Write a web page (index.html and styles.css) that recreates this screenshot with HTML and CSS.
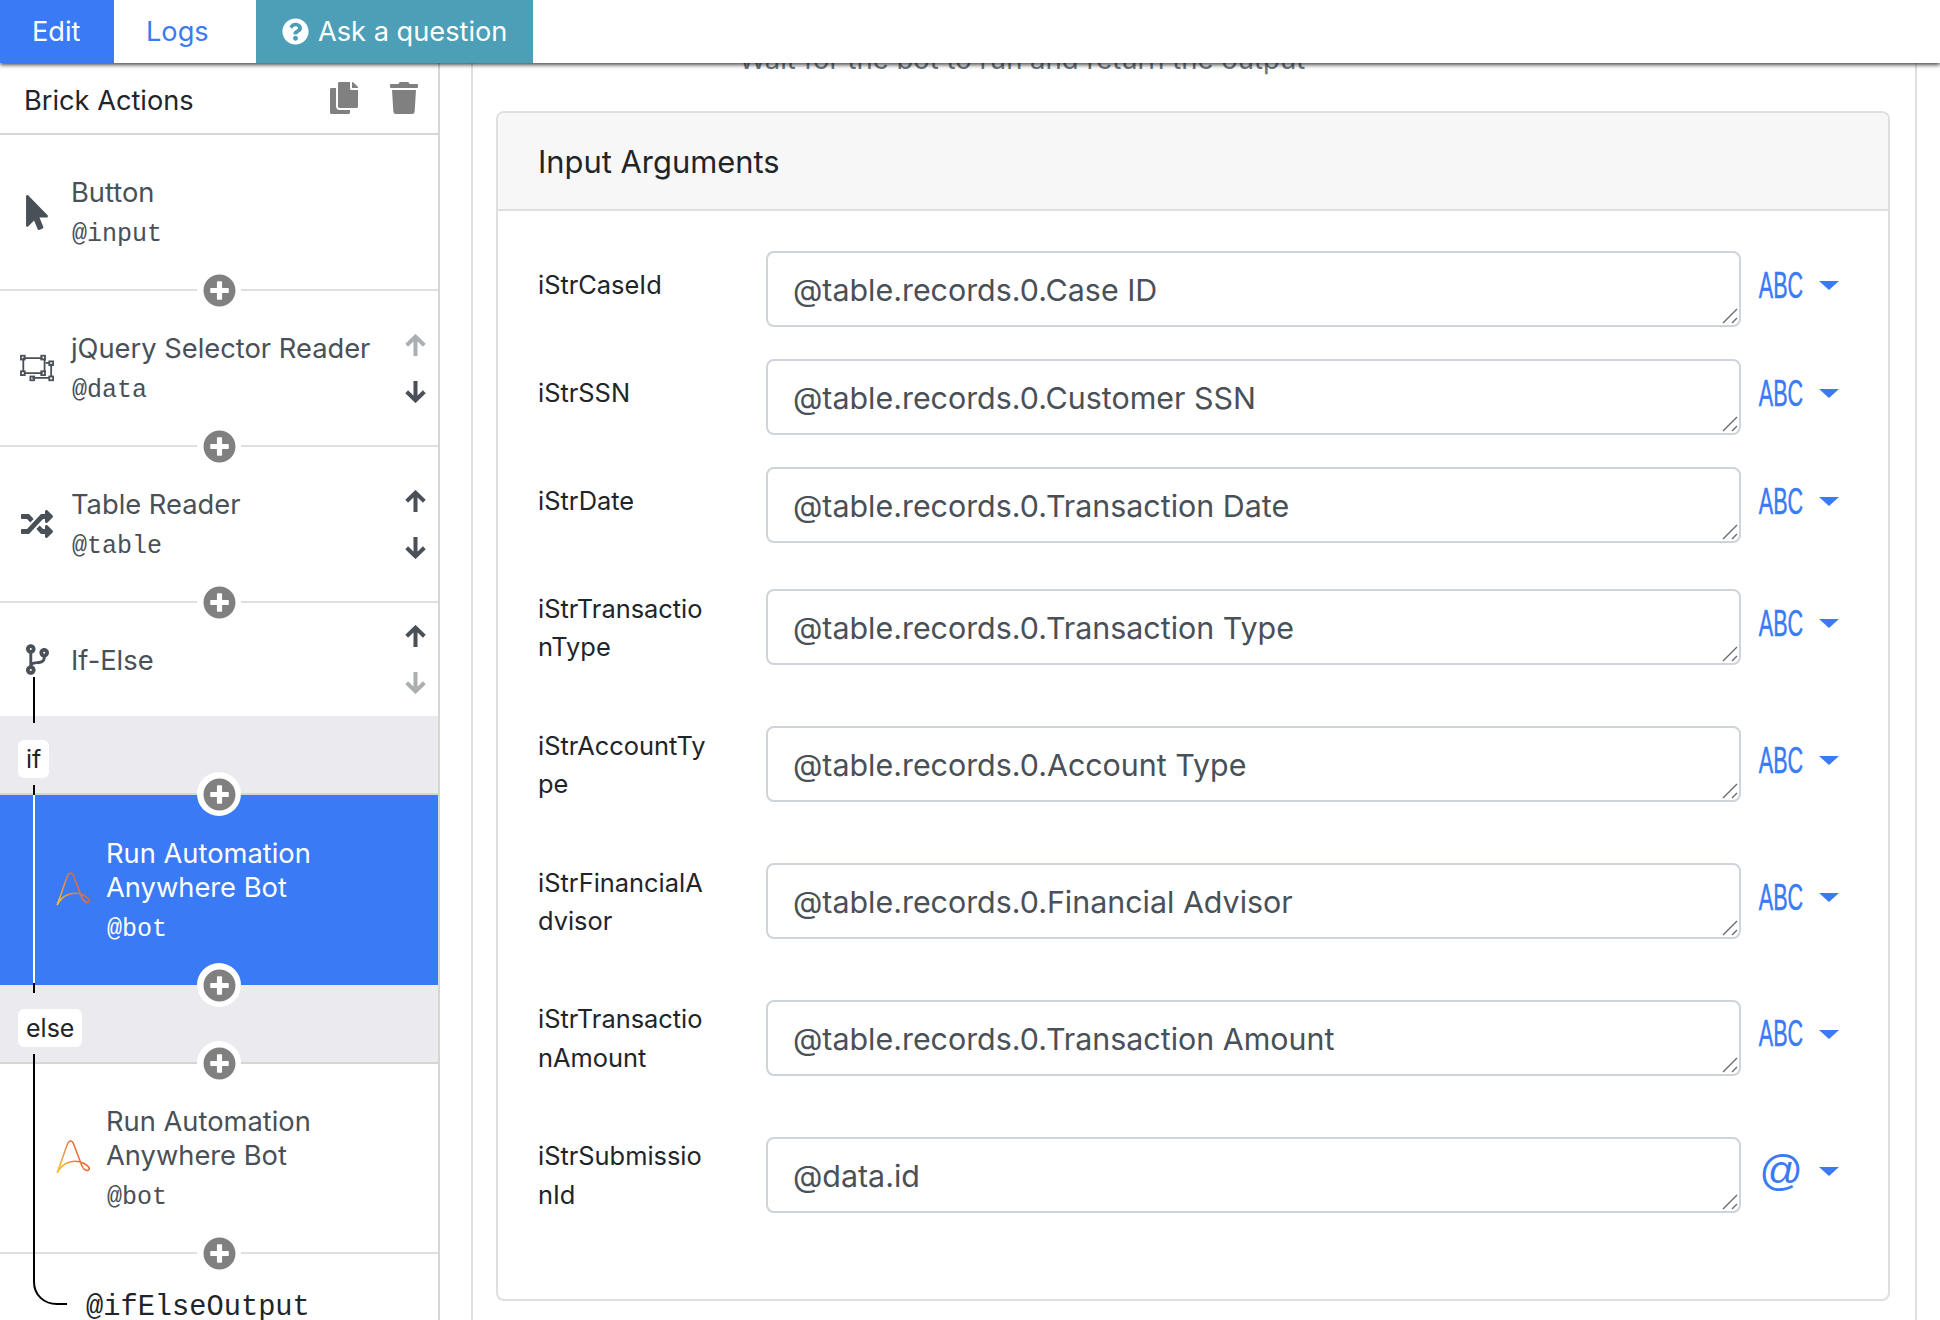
FILE: index.html
```html
<!DOCTYPE html>
<html lang="en">
<head>
    <meta charset="UTF-8">
    <title>Brick Actions</title>
    <link rel="stylesheet" href="styles.css">
</head>
<body>
    <svg class="sprite" aria-hidden="true">
        <defs>
            <linearGradient id="aa-grad" gradientUnits="userSpaceOnUse" x1="1" y1="33" x2="33" y2="15">
                <stop offset="0" stop-color="#fbc531"/>
                <stop offset="0.5" stop-color="#ee8a3c"/>
                <stop offset="1" stop-color="#dd4f2c"/>
            </linearGradient>
        </defs>
        <symbol id="i-plus" viewBox="0 0 512 512"><path d="M256 8C119 8 8 119 8 256s111 248 248 248 248-111 248-248S393 8 256 8zm144 276c0 6.6-5.4 12-12 12h-92v92c0 6.6-5.4 12-12 12h-56c-6.6 0-12-5.4-12-12v-92h-92c-6.6 0-12-5.4-12-12v-56c0-6.6 5.4-12 12-12h92v-92c0-6.6 5.4-12 12-12h56c6.6 0 12 5.4 12 12v92h92c6.6 0 12 5.4 12 12v56z"/></symbol>
        <symbol id="i-up" viewBox="0 0 24 24"><path d="M12 23V3.500M2.800 11.800 12 2.800l9.200 9" fill="none" stroke="currentColor" stroke-width="4.200"/></symbol>
        <symbol id="i-down" viewBox="0 0 24 24"><path d="M12 1V20.500M2.800 12.200l9.200 9 9.200-9" fill="none" stroke="currentColor" stroke-width="4.200"/></symbol>
        <symbol id="i-aa" viewBox="0 0 34 34"><path d="M1 33C6 21 9 9 12 3c1.500-2.800 4-2.800 5.200 0l8.800 23c1.500 4 5.500 5.500 7 3.500 1.200-2-1.500-4-5-6-5-2.500-11-3-17-.5C7 24.500 4 28 1 33z" fill="none" stroke="url(#aa-grad)" stroke-width="1.5"/></symbol>
        <symbol id="i-grip" viewBox="0 0 16 16"><path d="M1 15 15 1M10 15l5-5" fill="none" stroke="#6a6a6a" stroke-width="1.400"/></symbol>
    </svg>

    <nav class="topbar">
        <a class="tab tab-edit">Edit</a>
        <a class="tab tab-logs">Logs</a>
        <a class="tab tab-ask">
            <svg class="ask-icon" viewBox="0 0 512 512"><path d="M504 256c0 136.997-111.043 248-248 248S8 392.997 8 256C8 119.083 119.043 8 256 8s248 111.083 248 248zM262.655 90c-54.497 0-89.255 22.957-116.549 63.758-3.536 5.286-2.353 12.415 2.715 16.258l34.699 26.31c5.205 3.947 12.621 3.008 16.665-2.122 17.864-22.658 30.113-35.797 57.303-35.797 20.429 0 45.698 13.148 45.698 32.958 0 14.976-12.363 22.667-32.534 33.976C247.128 238.528 216 254.941 216 296v4c0 6.627 5.373 12 12 12h56c6.627 0 12-5.373 12-12v-1.333c0-28.462 83.186-29.647 83.186-106.667 0-58.002-60.165-102-116.531-102zM256 338c-25.365 0-46 20.635-46 46 0 25.364 20.635 46 46 46s46-20.636 46-46c0-25.365-20.635-46-46-46z"/></svg>
            Ask a question
        </a>
    </nav>

    <div class="workspace">
        <aside class="sidebar">
            <div class="sidebar-head">
                <span class="sidebar-title">Brick Actions</span>
                <svg class="head-icon head-copy" viewBox="0 0 448 512"><path d="M320 448v40c0 13.255-10.745 24-24 24H24c-13.255 0-24-10.745-24-24V120c0-13.255 10.745-24 24-24h72v296c0 30.879 25.121 56 56 56h168zm0-344V0H152c-13.255 0-24 10.745-24 24v368c0 13.255 10.745 24 24 24h272c13.255 0 24-10.745 24-24V128H344c-13.2 0-24-10.8-24-24zm120.971-31.029L375.029 7.029A24 24 0 0 0 358.059 0H352v96h96v-6.059a24 24 0 0 0-7.029-16.97z"/></svg>
                <svg class="head-icon" viewBox="0 0 448 512"><path d="M432 32H312l-9.400-18.700A24 24 0 0 0 281.100 0H166.800a23.720 23.720 0 0 0-21.400 13.300L136 32H16A16 16 0 0 0 0 48v32a16 16 0 0 0 16 16h416a16 16 0 0 0 16-16V48a16 16 0 0 0-16-16zM53.200 467a48 48 0 0 0 47.900 45h245.800a48 48 0 0 0 47.900-45L416 128H32z"/></svg>
            </div>

            <div class="brick">
                <div class="brick-icon">
                    <svg class="icon-pointer" viewBox="0 0 320 512"><path d="M302.189 329.126H196.105l55.831 135.993c3.889 9.428-.555 19.999-9.444 23.999l-49.165 21.427c-9.165 4-19.443-.571-23.332-9.714l-53.053-129.136-86.664 89.138C18.729 472.710 0 463.554 0 447.977V18.299C0 1.899 19.921-6.096 30.277 5.443l284.412 292.542c11.472 11.179 3.007 31.141-12.500 31.141z"/></svg>
                </div>
                <div class="brick-text">
                    <div class="brick-name">Button</div>
                    <div class="brick-var">@input</div>
                </div>
                <button class="add"><svg><use href="#i-plus"/></svg></button>
            </div>

            <div class="brick">
                <div class="brick-icon">
                    <svg class="icon-group" viewBox="0 0 36 28" fill="none" stroke="currentColor" stroke-width="1.900">
                        <path d="M3.500 3.500H24M3.500 3.500V18M26 3.500V18M5 19.500H24"/>
                        <path d="M13 24.500H31M33 9.500V23M27 8.500H31.500"/>
                        <rect x="1" y="1" width="4" height="4"/>
                        <rect x="22.500" y="1" width="4" height="4"/>
                        <rect x="1" y="17.500" width="4" height="4"/>
                        <rect x="22.500" y="17.500" width="4" height="4"/>
                        <rect x="11" y="23" width="4" height="4"/>
                        <rect x="31" y="23" width="4" height="4"/>
                        <rect x="31" y="7" width="4" height="4"/>
                    </svg>
                </div>
                <div class="brick-text">
                    <div class="brick-name">jQuery Selector Reader</div>
                    <div class="brick-var">@data</div>
                </div>
                <div class="move">
                    <svg class="off"><use href="#i-up"/></svg>
                    <svg><use href="#i-down"/></svg>
                </div>
                <button class="add"><svg><use href="#i-plus"/></svg></button>
            </div>

            <div class="brick">
                <div class="brick-icon">
                    <svg class="icon-shuffle" viewBox="0 0 512 512"><path d="M504.971 359.029c9.373 9.373 9.373 24.569 0 33.941l-80 79.984c-15.010 15.010-40.971 4.490-40.971-16.971V416h-58.785a12.004 12.004 0 0 1-8.773-3.812l-70.556-75.596 53.333-57.143L352 336h32v-39.981c0-21.438 25.943-31.998 40.971-16.971l80 79.981zM12 176h84l52.781 56.551 53.333-57.143-70.556-75.596A11.999 11.999 0 0 0 122.785 96H12c-6.627 0-12 5.373-12 12v56c0 6.627 5.373 12 12 12zm372 0v39.984c0 21.460 25.961 31.980 40.971 16.971l80-79.984c9.373-9.373 9.373-24.569 0-33.941l-80-79.981C409.943 24.021 384 34.582 384 56.019V96h-58.785a12.004 12.004 0 0 0-8.773 3.812L96 336H12c-6.627 0-12 5.373-12 12v56c0 6.627 5.373 12 12 12h110.785c3.326 0 6.503-1.381 8.773-3.812L352 176h32z"/></svg>
                </div>
                <div class="brick-text">
                    <div class="brick-name">Table Reader</div>
                    <div class="brick-var">@table</div>
                </div>
                <div class="move">
                    <svg><use href="#i-up"/></svg>
                    <svg><use href="#i-down"/></svg>
                </div>
                <button class="add"><svg><use href="#i-plus"/></svg></button>
            </div>

            <div class="brick brick-ifelse">
                <div class="brick-icon">
                    <svg class="icon-branch" viewBox="0 0 384 512"><path d="M384 144c0-44.200-35.800-80-80-80s-80 35.800-80 80c0 36.400 24.300 67.100 57.500 76.800-.6 16.100-4.200 28.500-11 36.900-15.400 19.200-49.300 22.400-85.200 25.700-28.200 2.600-57.400 5.400-81.300 16.900v-144c32.500-10.200 56-40.500 56-76.300 0-44.200-35.800-80-80-80S0 35.800 0 80c0 35.800 23.500 66.100 56 76.300v199.300C23.500 365.900 0 396.200 0 432c0 44.200 35.800 80 80 80s80-35.800 80-80c0-34-21.200-63.100-51.200-74.600 3.100-5.200 7.800-9.800 14.900-13.400 16.200-8.200 40.400-10.400 66.100-12.800 42.200-3.900 90-8.400 118.200-43.400 14-17.400 21.100-39.800 21.600-67.900 31.600-10.800 54.400-40.700 54.400-75.900zM80 64c8.800 0 16 7.200 16 16s-7.200 16-16 16-16-7.200-16-16 7.200-16 16-16zm0 384c-8.800 0-16-7.200-16-16s7.200-16 16-16 16 7.200 16 16-7.200 16-16 16zm224-320c8.800 0 16 7.200 16 16s-7.200 16-16 16-16-7.200-16-16 7.200-16 16-16z"/></svg>
                </div>
                <div class="brick-text">
                    <div class="brick-name">If-Else</div>
                </div>
                <div class="move">
                    <svg><use href="#i-up"/></svg>
                    <svg class="off"><use href="#i-down"/></svg>
                </div>
            </div>

            <div class="branch-head">
                <span class="branch-label">if</span>
                <button class="add add-ring"><svg><use href="#i-plus"/></svg></button>
            </div>

            <div class="brick brick-nested brick-active">
                <div class="brick-icon"><svg class="icon-aa"><use href="#i-aa"/></svg></div>
                <div class="brick-text">
                    <div class="brick-name">Run Automation Anywhere Bot</div>
                    <div class="brick-var">@bot</div>
                </div>
                <button class="add add-ring"><svg><use href="#i-plus"/></svg></button>
            </div>

            <div class="branch-head">
                <span class="branch-label">else</span>
                <button class="add add-ring"><svg><use href="#i-plus"/></svg></button>
            </div>

            <div class="brick brick-nested">
                <div class="brick-icon"><svg class="icon-aa"><use href="#i-aa"/></svg></div>
                <div class="brick-text">
                    <div class="brick-name">Run Automation Anywhere Bot</div>
                    <div class="brick-var">@bot</div>
                </div>
                <button class="add"><svg><use href="#i-plus"/></svg></button>
            </div>

            <div class="output-var">@ifElseOutput</div>

            <!-- линия ветвления поверх строк, y = страница минус 63 -->
            <svg class="branch-line" viewBox="0 0 80 1257" fill="none" stroke-width="2">
                <path d="M34 614V660M34 722V732" stroke="#000"/>
                <path d="M34 732V920" stroke="#fff"/>
                <path d="M34 920V930M34 991V1219C34 1232 44 1241 57 1241H67" stroke="#000"/>
            </svg>
        </aside>

        <main class="main">
            <p class="hint">Wait for the bot to run and return the output</p>

            <section class="card">
                <h3 class="card-head">Input Arguments</h3>
                <div class="card-body">
                    <div class="arg">
                        <label class="arg-name">iStrCaseId</label>
                        <div class="arg-field">
                            <textarea class="arg-value" spellcheck="false">@table.records.0.Case ID</textarea>
                            <svg class="grip"><use href="#i-grip"/></svg>
                        </div>
                        <div class="arg-type"><span class="type-glyph"><span class="type-abc">ABC</span></span><span class="caret"></span></div>
                    </div>
                    <div class="arg">
                        <label class="arg-name">iStrSSN</label>
                        <div class="arg-field">
                            <textarea class="arg-value" spellcheck="false">@table.records.0.Customer SSN</textarea>
                            <svg class="grip"><use href="#i-grip"/></svg>
                        </div>
                        <div class="arg-type"><span class="type-glyph"><span class="type-abc">ABC</span></span><span class="caret"></span></div>
                    </div>
                    <div class="arg">
                        <label class="arg-name">iStrDate</label>
                        <div class="arg-field">
                            <textarea class="arg-value" spellcheck="false">@table.records.0.Transaction Date</textarea>
                            <svg class="grip"><use href="#i-grip"/></svg>
                        </div>
                        <div class="arg-type"><span class="type-glyph"><span class="type-abc">ABC</span></span><span class="caret"></span></div>
                    </div>
                    <div class="arg">
                        <label class="arg-name">iStrTransactionType</label>
                        <div class="arg-field">
                            <textarea class="arg-value" spellcheck="false">@table.records.0.Transaction Type</textarea>
                            <svg class="grip"><use href="#i-grip"/></svg>
                        </div>
                        <div class="arg-type"><span class="type-glyph"><span class="type-abc">ABC</span></span><span class="caret"></span></div>
                    </div>
                    <div class="arg">
                        <label class="arg-name">iStrAccountType</label>
                        <div class="arg-field">
                            <textarea class="arg-value" spellcheck="false">@table.records.0.Account Type</textarea>
                            <svg class="grip"><use href="#i-grip"/></svg>
                        </div>
                        <div class="arg-type"><span class="type-glyph"><span class="type-abc">ABC</span></span><span class="caret"></span></div>
                    </div>
                    <div class="arg">
                        <label class="arg-name">iStrFinancialAdvisor</label>
                        <div class="arg-field">
                            <textarea class="arg-value" spellcheck="false">@table.records.0.Financial Advisor</textarea>
                            <svg class="grip"><use href="#i-grip"/></svg>
                        </div>
                        <div class="arg-type"><span class="type-glyph"><span class="type-abc">ABC</span></span><span class="caret"></span></div>
                    </div>
                    <div class="arg">
                        <label class="arg-name">iStrTransactionAmount</label>
                        <div class="arg-field">
                            <textarea class="arg-value" spellcheck="false">@table.records.0.Transaction Amount</textarea>
                            <svg class="grip"><use href="#i-grip"/></svg>
                        </div>
                        <div class="arg-type"><span class="type-glyph"><span class="type-abc">ABC</span></span><span class="caret"></span></div>
                    </div>
                    <div class="arg">
                        <label class="arg-name">iStrSubmissionId</label>
                        <div class="arg-field">
                            <textarea class="arg-value" spellcheck="false">@data.id</textarea>
                            <svg class="grip"><use href="#i-grip"/></svg>
                        </div>
                        <div class="arg-type"><span class="type-glyph"><span class="type-at">@</span></span><span class="caret"></span></div>
                    </div>
                </div>
            </section>
        </main>
    </div>
</body>
</html>
```

FILE: styles.css
```css
* {
    box-sizing: border-box;
}
html, body {
    height: 100%;
}
body {
    margin: 0;
    overflow: hidden;
    background-color: white;
    color: #212529;
    font-family: Inter, "Noto Sans", sans-serif;
}
.sprite {
    position: absolute;
    width: 0;
    height: 0;
}

/* Верхняя панель */
.topbar {
    position: relative;
    z-index: 10;
    display: flex;
    height: 63px;
    background-color: white;
    box-shadow: 0 2px 4px rgba(0, 0, 0, 0.7);
}
.tab {
    display: flex;
    align-items: center;
    padding-bottom: 1px;
    font-size: 27.2px;
}
.tab-edit {
    width: 114px;
    padding-left: 32px;
    background-color: #3a7af5;
    color: white;
}
.tab-logs {
    width: 142px;
    padding-left: 32px;
    color: #3a7af5;
}
.tab-ask {
    width: 277px;
    padding-left: 26px;
    gap: 9px;
    background-color: #4c9fb6;
    color: white;
}
.ask-icon {
    width: 27px;
    height: 27px;
    fill: white;
}

.workspace {
    display: flex;
    height: calc(100% - 63px);
}

/* Левая колонка */
.sidebar {
    position: relative;
    flex: none;
    width: 440px;
    border-right: 2px solid #d6d6d6;
}
.sidebar-head {
    display: flex;
    align-items: center;
    height: 72px;
    padding: 4px 20px 0 24px;
    border-bottom: 2px solid #d6d6d6;
}
.sidebar-title {
    flex: 1;
    font-size: 27.2px;
}
.head-icon {
    width: 28px;
    height: 32px;
    margin-bottom: 4px;
    fill: #808080;
}
.head-copy {
    margin-right: 32px;
}

.brick {
    position: relative;
    display: flex;
    align-items: center;
    height: 156px;
    padding: 0 11px 0 20px;
    border-bottom: 2px solid #dfdfdf;
    color: #495057;
}
.brick-ifelse {
    height: 113px;
    border-bottom: none;
}
.brick-nested {
    height: 190px;
    padding-left: 56px;
}
.brick-active {
    border-bottom: none;
    background-color: #3a7af5;
    color: white;
}
.brick-icon {
    flex: none;
    display: flex;
    align-items: center;
    justify-content: center;
    width: 34px;
    margin-right: 17px;
}
.brick-nested .brick-icon {
    margin-right: 16px;
}
.brick-icon svg {
    fill: currentColor;
}
.icon-pointer {
    width: 22px;
    height: 35px;
}
.icon-group {
    width: 36px;
    height: 28px;
    fill: none !important;
}
.icon-shuffle {
    width: 32px;
    height: 32px;
}
.icon-branch {
    width: 23px;
    height: 31px;
}
.icon-aa {
    width: 34px;
    height: 34px;
    margin-top: -2px;
}
.brick-text {
    flex: 1;
    min-width: 0;
    padding-top: 2px;
}
.brick-nested .brick-text {
    padding-right: 60px;
}
.brick-name {
    font-size: 27.3px;
    line-height: 33.6px;
}
.brick-var {
    margin: 10px 0 0 1px;
    font-family: "Liberation Mono", monospace;
    font-size: 25px;
    line-height: 30px;
}
.move {
    flex: none;
    display: flex;
    flex-direction: column;
    gap: 23px;
}
.move svg {
    display: block;
    width: 23px;
    height: 23px;
    color: #495057;
}
.move svg.off {
    opacity: 0.45;
}

/* Кнопка добавления на линии */
.add {
    position: absolute;
    right: 197px;
    bottom: -23px;
    z-index: 2;
    display: flex;
    align-items: center;
    justify-content: center;
    width: 44px;
    height: 44px;
    padding: 0;
    border: none;
    border-radius: 50%;
    background-color: white;
}
.add svg {
    width: 33px;
    height: 33px;
    fill: #808080;
}
.brick-active .add {
    bottom: -22px;
}

.branch-head {
    position: relative;
    display: flex;
    align-items: center;
    height: 79px;
    padding: 9px 18px 0;
    border-bottom: 2px solid #d6d6d6;
    background-color: #ebebef;
}
.branch-label {
    padding: 0 8px;
    border-radius: 6px;
    background-color: white;
    font-size: 25px;
    line-height: 38px;
}

.output-var {
    padding: 42px 0 0 86px;
    font-family: "Liberation Mono", monospace;
    font-size: 28.7px;
    line-height: 24px;
    color: #212529;
}
.branch-line {
    position: absolute;
    top: 0;
    left: 0;
    z-index: 1;
    width: 80px;
    height: 1257px;
    pointer-events: none;
}

/* Правая часть */
.main {
    flex: none;
    width: 1446px;
    margin-left: 31px;
    border-left: 2px solid #dfdfdf;
    border-right: 2px solid #dfdfdf;
}
.hint {
    height: 68px;
    margin: -20px 0 0;
    padding-left: 266px;
    font-size: 27.5px;
    line-height: 32px;
    color: #6c757d;
}
.card {
    width: 1394px;
    height: 1190px;
    margin-left: 23px;
    border: 2px solid #dfdfdf;
    border-radius: 8px;
    overflow: hidden;
}
.card-head {
    display: flex;
    align-items: center;
    height: 98px;
    margin: 0;
    padding-left: 40px;
    border-bottom: 2px solid #dfdfdf;
    background-color: #f7f7f7;
    font-size: 30.9px;
    font-weight: 400;
}
.card-body {
    display: flex;
    flex-direction: column;
    gap: 32px;
    padding: 40px 0 0 40px;
}
.arg {
    display: flex;
    align-items: center;
}
.arg-name {
    flex: none;
    align-self: flex-start;
    width: 228px;
    padding: 15px 56px 13px 0;
    font-size: 25.4px;
    line-height: 38.4px;
    word-break: break-all;
}
.arg-field {
    position: relative;
    flex: none;
    width: 975px;
    height: 76px;
}
.arg-value {
    display: block;
    width: 100%;
    height: 100%;
    padding: 19px 25px 17px;
    border: 2px solid #ced4da;
    border-radius: 8px;
    color: #495057;
    font-family: Inter, "Noto Sans", sans-serif;
    font-size: 30.4px;
    line-height: 36px;
    outline: none;
    resize: none;
}
.grip {
    position: absolute;
    right: 3px;
    bottom: 3px;
    width: 16px;
    height: 16px;
}
.arg-type {
    display: flex;
    align-items: center;
    margin: 0 0 7px 18px;
}
.type-glyph {
    display: flex;
    justify-content: center;
    width: 44px;
    margin-right: 16px;
    color: #3a7af5;
    font-family: "Liberation Sans", sans-serif;
    line-height: 40px;
}
.type-abc {
    display: inline-block;
    font-size: 36px;
    -webkit-text-stroke: 0.5px #3a7af5;
    transform: scaleX(0.6);
}
.type-at {
    margin-top: -3px;
    font-size: 43px;
}
.caret {
    width: 0;
    height: 0;
    border-top: 9px solid #3a7af5;
    border-left: 10px solid transparent;
    border-right: 10px solid transparent;
}
```
